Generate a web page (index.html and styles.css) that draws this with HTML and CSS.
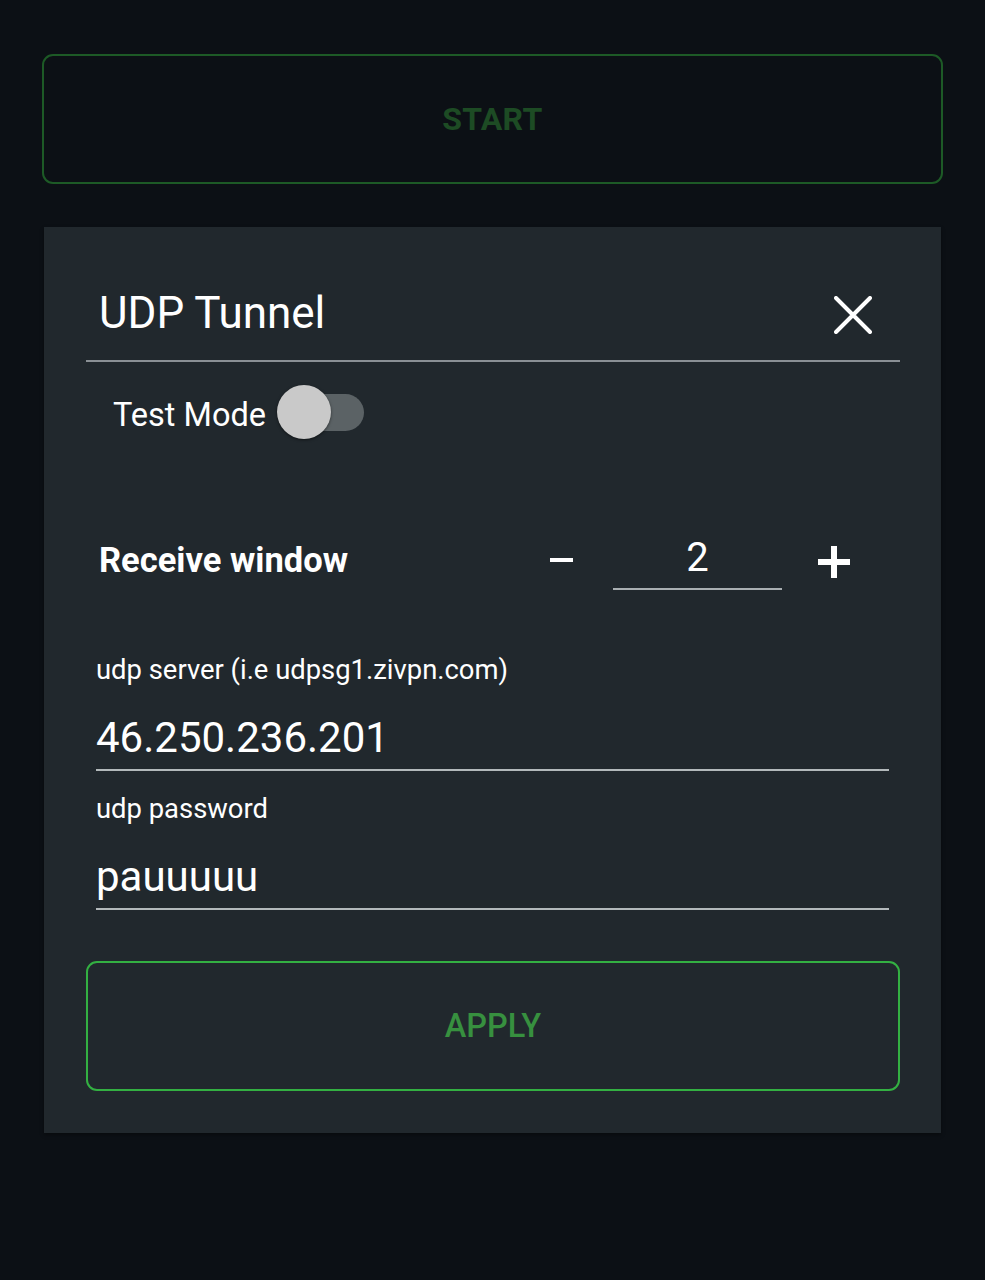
FILE: index.html
```html
<!DOCTYPE html>
<html>
<head>
<meta charset="utf-8">
<link rel="stylesheet" href="styles.css">
</head>
<body>
<div class="page">
  <div class="start-btn">START</div>
  <div class="dialog">
    <div class="header">
      <div class="title">UDP Tunnel</div>
      <svg class="close" width="38" height="38" viewBox="0 0 38 38"><path d="M2 2L36 36M36 2L2 36" stroke="#fff" stroke-width="4" stroke-linecap="round"/></svg>
    </div>
    <div class="content">
      <div class="toggle-row">
        <span class="toggle-label">Test Mode</span>
        <span class="switch"><span class="track"></span><span class="thumb"></span></span>
      </div>
      <div class="rw-row">
        <span class="rw-label">Receive window</span>
        <div class="stepper">
          <span class="minus"></span>
          <span class="rw-value">2</span>
          <span class="plus"></span>
        </div>
      </div>
      <div class="field">
        <div class="field-label">udp server (i.e udpsg1.zivpn.com)</div>
        <div class="field-input">46.250.236.201</div>
      </div>
      <div class="field second">
        <div class="field-label">udp password</div>
        <div class="field-input">pauuuuu</div>
      </div>
      <div class="apply-btn">APPLY</div>
    </div>
  </div>
</div>
</body>
</html>
```

FILE: styles.css
```css
html, body {
  margin: 0;
  padding: 0;
  background: #0c1015;
  font-family: Roboto, "Noto Sans", sans-serif;
}
.page {
  padding: 54px 42px 0 42px;
  min-height: 1280px;
  box-sizing: border-box;
}
.start-btn {
  height: 130px;
  box-sizing: border-box;
  border: 2px solid #1d5a26;
  border-radius: 11px;
  display: flex;
  align-items: center;
  justify-content: center;
  color: #1d4b24;
  font-weight: 700;
  font-size: 32px;
  letter-spacing: 0.3px;
}
.dialog {
  margin: 43px 2px 0 2px;
  background: #21282d;
  height: 906px;
  box-sizing: border-box;
  box-shadow: 0 2px 4px rgba(0,0,0,0.4);
}
.header {
  margin: 0 41px 0 42px;
  height: 135px;
  padding: 0 28px 0 13px;
  box-sizing: border-box;
  border-bottom: 2px solid #8a9095;
  display: flex;
  align-items: flex-start;
  justify-content: space-between;
}
.title {
  color: #fff;
  font-size: 44px;
  line-height: 56px;
  margin-top: 58px;
}
.close { margin-top: 69px; }
.content {
  margin: 0 41px 0 42px;
}
.toggle-row {
  height: 100px;
  display: flex;
  align-items: center;
  padding-left: 27px;
}
.toggle-label {
  color: #fff;
  font-size: 32.5px;
  position: relative;
  top: 3px;
}
.switch {
  position: relative;
  width: 87px;
  height: 56px;
  margin-left: 11px;
  display: inline-block;
}
.track {
  position: absolute;
  left: 6px;
  top: 10px;
  width: 81px;
  height: 37px;
  border-radius: 19px;
  background: #5b6265;
}
.thumb {
  position: absolute;
  left: 0;
  top: 1px;
  width: 54px;
  height: 54px;
  border-radius: 50%;
  background: #c9c9c9;
  box-shadow: 0 1px 3px rgba(0,0,0,0.5);
}
.rw-row {
  margin-top: 48px;
  height: 100px;
  display: flex;
  align-items: center;
  justify-content: space-between;
  padding: 0 50px 0 13px;
}
.rw-label {
  color: #fff;
  font-size: 34.5px;
  font-weight: 700;
}
.stepper {
  display: flex;
  align-items: center;
}
.minus {
  width: 23px;
  height: 4px;
  background: #fff;
  display: block;
}
.rw-value {
  margin-left: 40px;
  width: 169px;
  box-sizing: border-box;
  text-align: center;
  color: #fff;
  font-size: 40px;
  line-height: 48px;
  padding: 2px 0 6px 0;
  border-bottom: 2px solid #a9afb2;
  position: relative;
  top: 1px;
}
.plus {
  margin-left: 36px;
  width: 32px;
  height: 32px;
  position: relative;
  display: block;
  top: 2px;
}
.plus::before, .plus::after {
  content: "";
  position: absolute;
  background: #fff;
}
.plus::before { left: 0; top: 13px; width: 32px; height: 6px; }
.plus::after { left: 13px; top: 0; width: 6px; height: 32px; }
.field {
  margin: 40px 11px 0 10px;
}
.field.second { margin-top: 18px; }
.field-label {
  color: #fff;
  font-size: 27.4px;
  line-height: 40px;
}
.field-input {
  color: #fff;
  font-size: 42px;
  line-height: 40px;
  padding: 28px 0 11px 0;
  border-bottom: 2px solid #b3b9bb;
}
.apply-btn {
  margin-top: 51px;
  height: 130px;
  box-sizing: border-box;
  border: 2.5px solid #33b042;
  border-radius: 11px;
  display: flex;
  align-items: center;
  justify-content: center;
  color: #37903f;
  font-size: 32.5px;
  font-weight: 500;
}
```
